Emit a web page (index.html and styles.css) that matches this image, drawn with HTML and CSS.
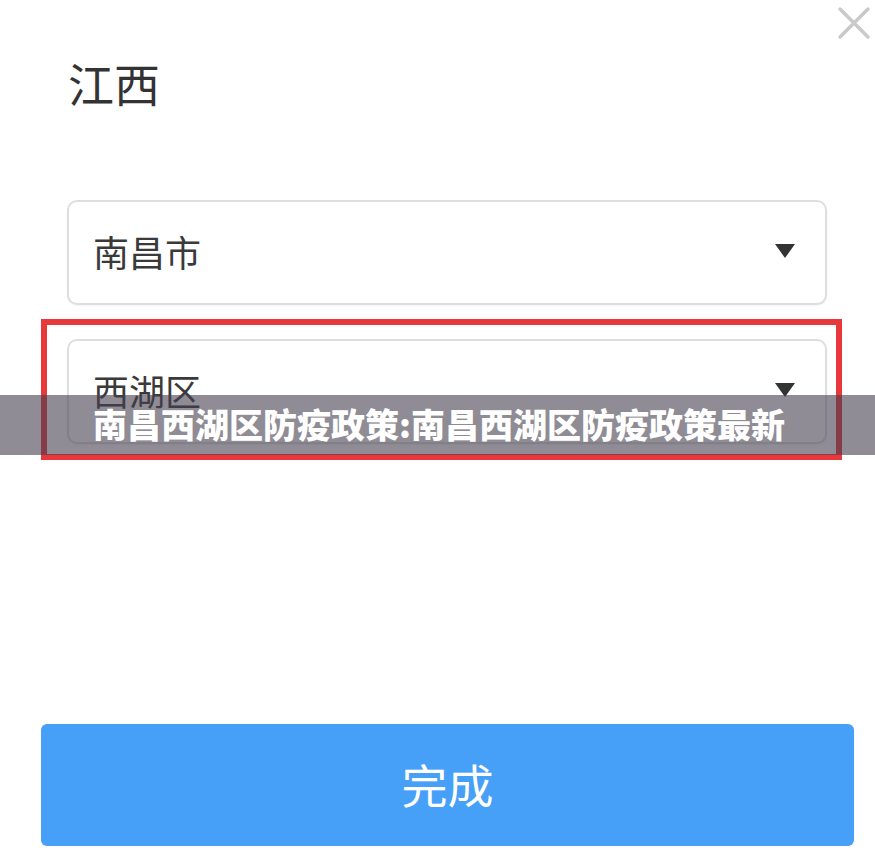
FILE: index.html
```html
<!DOCTYPE html>
<html lang="zh-CN">
<head>
    <meta charset="UTF-8">
    <meta name="viewport" content="width=device-width, initial-scale=1.0">
    <title>南昌西湖区防疫政策</title>
    <link rel="stylesheet" href="styles.css">
</head>
<body>
    <div class="sheet">
        <button class="close" type="button" aria-label="关闭">
            <svg width="34" height="34" viewBox="0 0 34 34">
                <path d="M3 3 L31 31 M31 3 L3 31" stroke="#c9c9c9" stroke-width="3.4" stroke-linecap="round" fill="none"/>
            </svg>
        </button>

        <h1 class="title">江西</h1>

        <div class="field">
            <span class="field-text">南昌市</span>
            <span class="caret"></span>
        </div>

        <div class="highlight">
            <div class="field field-inner">
                <span class="field-text">西湖区</span>
                <span class="caret"></span>
            </div>
        </div>

        <button class="done" type="button">完成</button>

        <div class="caption">南昌西湖区防疫政策:南昌西湖区防疫政策最新</div>
    </div>
</body>
</html>
```

FILE: styles.css
```css
body {
    margin: 0;
    background: #fff;
    font-family: "Noto Sans CJK SC", "Noto Sans", sans-serif;
    color: #333;
}
.sheet {
    position: relative;
    height: 852px;
    padding: 59px 21px 0 41px;
    box-sizing: border-box;
    display: flex;
    flex-direction: column;
    align-items: flex-start;
}
.close {
    position: absolute;
    top: 6px;
    left: 837px;
    padding: 0;
    border: none;
    background: none;
}
.close svg {
    display: block;
}
.title {
    margin: 0 0 0 27px;
    font-size: 46px;
    line-height: 46px;
    font-weight: normal;
    color: #333;
}
.field {
    width: 760px;
    height: 105px;
    margin: 95px 0 0 26px;
    box-sizing: border-box;
    border: 2px solid #dedede;
    border-radius: 10px;
    display: flex;
    align-items: center;
    justify-content: space-between;
    padding: 0 30px 4px 24px;
    box-shadow: 0 1px 2px rgba(0, 0, 0, 0.05);
}
.field-text {
    font-size: 36px;
    line-height: 1;
    color: #3a3a3a;
}
.caret {
    width: 0;
    height: 0;
    border-left: 10px solid transparent;
    border-right: 10px solid transparent;
    border-top: 14px solid #333;
}
.highlight {
    width: 801px;
    margin-top: 14px;
    box-sizing: border-box;
    border: 6px solid #e8383b;
    padding: 14px 9px 10px 20px;
}
.field-inner {
    margin: 0;
}
.done {
    width: 100%;
    height: 122px;
    margin-top: 264px;
    border: none;
    border-radius: 6px;
    background: #47a0f8;
    color: #fff;
    font-family: inherit;
    font-size: 46px;
    padding: 0 0 4px;
}
.caption {
    position: absolute;
    top: 395px;
    left: 0;
    right: 0;
    height: 60px;
    background: rgba(68, 64, 78, 0.6);
    color: #fff;
    font-size: 34px;
    font-weight: 900;
    line-height: 58px;
    padding-left: 93px;
    white-space: nowrap;
}
```
